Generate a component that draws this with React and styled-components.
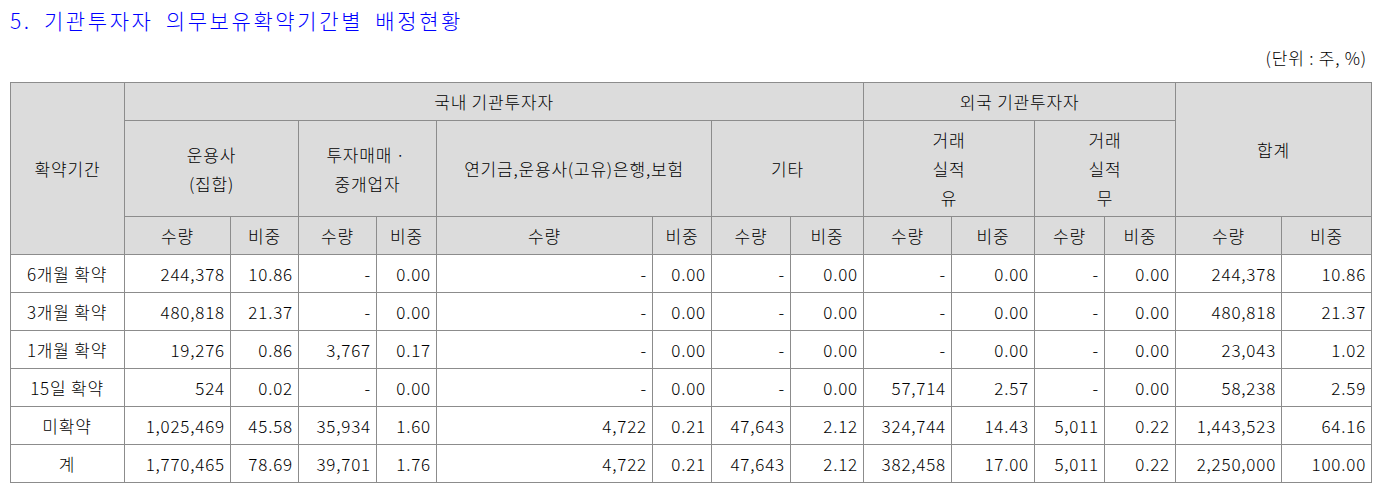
import React from "react";
import styled, { createGlobalStyle } from "styled-components";

const GlobalStyle = createGlobalStyle`
  body {
    margin: 0;
    background: #fff;
    font-family: "Noto Sans CJK KR", "Liberation Sans", sans-serif;
    font-weight: 300;
    color: #000;
  }
`;

const Page = styled.div`
  padding: 5px 5px 0 10px;
  width: 1361px;
`;

const Title = styled.h2`
  margin: 0;
  font-size: 21px;
  font-weight: 300;
  line-height: 30px;
  color: #0000ff;
  letter-spacing: 2.6px;
  word-spacing: 5px;
`;

const Unit = styled.div`
  text-align: right;
  font-size: 17px;
  line-height: 24px;
  letter-spacing: 0.8px;
  margin-top: 11px;
  margin-bottom: 12px;
  padding-right: 4px;
`;

const Table = styled.table`
  border-collapse: collapse;
  table-layout: fixed;
  width: 1362px;
  border: 1px solid #000;
  font-size: 17px;
  font-weight: 300;
  letter-spacing: 0.8px;
`;

const Th = styled.th`
  background: #dcdcdc;
  border: 1px solid #8c8c8c;
  font-weight: 300;
  text-align: center;
  vertical-align: middle;
  padding: 0 4px;
  line-height: 29px;
  height: ${(p) => p.$h || 37}px;
`;

const Td = styled.td`
  border: 1px solid #8c8c8c;
  height: 37px;
  padding: 0 5px 0 4px;
  text-align: ${(p) => (p.$center ? "center" : "right")};
  vertical-align: middle;
  white-space: nowrap;
`;

const widths = [114, 106, 68, 78, 60, 216, 59, 79, 73, 88, 83, 70, 71, 106, 90];

const rows = [
  ["6개월 확약", "244,378", "10.86", "-", "0.00", "-", "0.00", "-", "0.00", "-", "0.00", "-", "0.00", "244,378", "10.86"],
  ["3개월 확약", "480,818", "21.37", "-", "0.00", "-", "0.00", "-", "0.00", "-", "0.00", "-", "0.00", "480,818", "21.37"],
  ["1개월 확약", "19,276", "0.86", "3,767", "0.17", "-", "0.00", "-", "0.00", "-", "0.00", "-", "0.00", "23,043", "1.02"],
  ["15일 확약", "524", "0.02", "-", "0.00", "-", "0.00", "-", "0.00", "57,714", "2.57", "-", "0.00", "58,238", "2.59"],
  ["미확약", "1,025,469", "45.58", "35,934", "1.60", "4,722", "0.21", "47,643", "2.12", "324,744", "14.43", "5,011", "0.22", "1,443,523", "64.16"],
  ["계", "1,770,465", "78.69", "39,701", "1.76", "4,722", "0.21", "47,643", "2.12", "382,458", "17.00", "5,011", "0.22", "2,250,000", "100.00"],
];

const groups = [
  ["운용사", "(집합)"],
  ["투자매매ㆍ", "중개업자"],
  ["연기금,운용사(고유)은행,보험"],
  ["기타"],
  ["거래", "실적", "유"],
  ["거래", "실적", "무"],
];

const Lines = ({ lines }) =>
  lines.map((l, i) => (
    <React.Fragment key={i}>
      {i > 0 && <br />}
      {l}
    </React.Fragment>
  ));

export default function App() {
  return (
    <Page>
      <GlobalStyle />
      <Title>5. 기관투자자 의무보유확약기간별 배정현황</Title>
      <Unit>(단위 : 주, %)</Unit>
      <Table>
        <colgroup>
          {widths.map((w, i) => (
            <col key={i} style={{ width: w }} />
          ))}
        </colgroup>
        <thead>
          <tr>
            <Th rowSpan={3}>확약기간</Th>
            <Th colSpan={8}>국내 기관투자자</Th>
            <Th colSpan={4}>외국 기관투자자</Th>
            <Th colSpan={2} rowSpan={2}>합계</Th>
          </tr>
          <tr>
            {groups.map((g, i) => (
              <Th key={i} colSpan={2} $h={95}>
                <Lines lines={g} />
              </Th>
            ))}
          </tr>
          <tr>
            {Array.from({ length: 7 }).flatMap((_, i) => [
              <Th key={i + "a"}>수량</Th>,
              <Th key={i + "b"}>비중</Th>,
            ])}
          </tr>
        </thead>
        <tbody>
          {rows.map((r) => (
            <tr key={r[0]}>
              {r.map((c, i) => (
                <Td key={i} $center={i === 0}>
                  {c}
                </Td>
              ))}
            </tr>
          ))}
        </tbody>
      </Table>
    </Page>
  );
}
